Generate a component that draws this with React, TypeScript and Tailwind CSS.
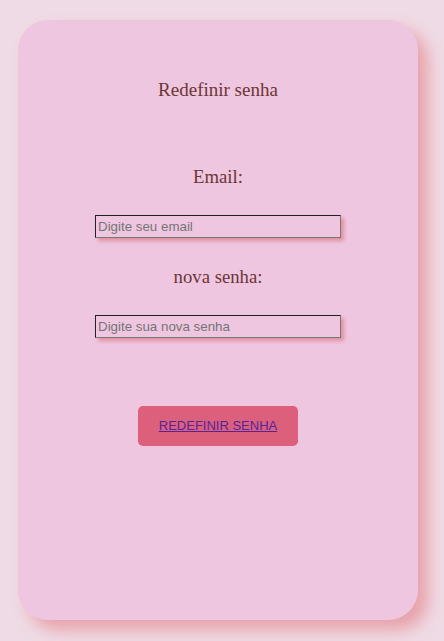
import React from "react";

function Field({ label, placeholder, type }: { label: string; placeholder: string; type: string }) {
  return (
    <>
      <label className="block text-center text-[18.72px] leading-[22px] text-[#6b3636] font-['Liberation_Serif',serif]">
        {label}
      </label>
      <input
        type={type}
        placeholder={placeholder}
        className="mt-[27px] h-[23px] w-[246px] border border-t-[#222] border-l-[#222] border-r-[#777] border-b-[#777] bg-transparent px-[2px] text-[13.33px] font-['Liberation_Sans',sans-serif] text-black placeholder:text-[#757575] outline-none shadow-[3px_3px_4px_#e0909e]"
      />
    </>
  );
}

export default function App() {
  return (
    <div className="min-h-[641px] w-full bg-[#efdbe5] pt-[20px] pl-[18px]">
      <div className="flex h-[600px] w-[400px] flex-col items-center rounded-[30px] bg-[#efc6e0] pt-[59px] shadow-[10px_10px_16px_#e8a2aa]">
        <h2 className="text-center text-[19px] leading-[22px] text-[#6b3636] font-['Liberation_Serif',serif]">
          Redefinir senha
        </h2>

        <div className="mt-[65px] flex flex-col items-center">
          <Field label="Email:" placeholder="Digite seu email" type="email" />
        </div>
        <div className="mt-[28px] flex flex-col items-center">
          <Field label="nova senha:" placeholder="Digite sua nova senha" type="password" />
        </div>

        <button className="mt-[68px] flex h-[40px] w-[160px] items-center justify-center rounded-[5px] bg-[#dc5f7b]">
          <a href="#" className="text-[13px] text-[#55249b] underline font-['Liberation_Sans',sans-serif]">
            REDEFINIR SENHA
          </a>
        </button>
      </div>
    </div>
  );
}
